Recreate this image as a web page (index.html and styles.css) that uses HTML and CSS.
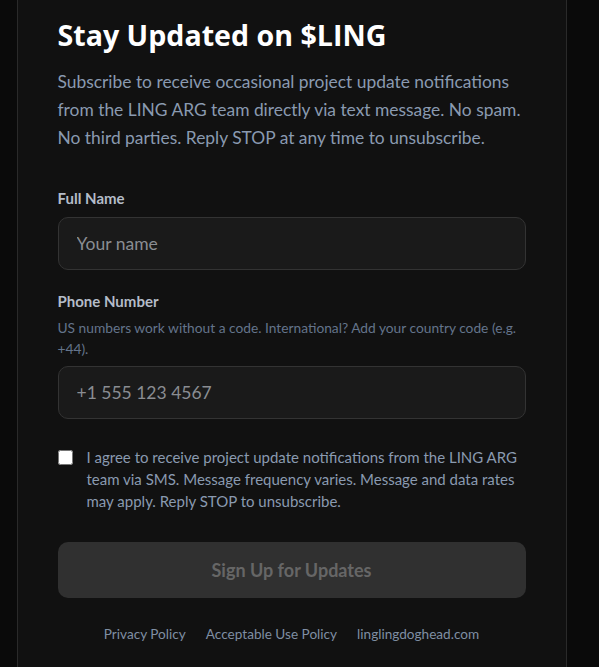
FILE: index.html
```html
<!DOCTYPE html>
<html lang="en">
  <head>
    <meta charset="UTF-8" />
    <meta name="viewport" content="width=device-width, initial-scale=1.0" />
    <title>Stay Updated on $LING</title>
    <link rel="stylesheet" href="styles.css">
  </head>
  <body>
    <main class="page">
      <section class="card">
        <h1>Stay Updated on $LING</h1>
        <p class="intro">
          Subscribe to receive occasional project update notifications from the
          LING ARG team directly via text message. No spam. No third parties.
          Reply STOP at any time to unsubscribe.
        </p>

        <form class="signup" onsubmit="return false">
          <div class="field">
            <label for="full-name">Full Name</label>
            <input type="text" id="full-name" placeholder="Your name" />
          </div>

          <div class="field">
            <label for="phone">Phone Number</label>
            <p class="hint">
              US numbers work without a code. International? Add your country
              code (e.g. +44).
            </p>
            <input type="tel" id="phone" placeholder="+1 555 123 4567" />
          </div>

          <div class="consent">
            <input type="checkbox" id="consent" />
            <label for="consent">
              I agree to receive project update notifications from the LING ARG
              team via SMS. Message frequency varies. Message and data rates
              may apply. Reply STOP to unsubscribe.
            </label>
          </div>

          <button type="submit" class="submit-btn" disabled>
            Sign Up for Updates
          </button>
        </form>

        <nav class="footer-links">
          <a href="#">Privacy Policy</a>
          <a href="#">Acceptable Use Policy</a>
          <a href="#">linglingdoghead.com</a>
        </nav>
      </section>
    </main>
  </body>
</html>
```

FILE: styles.css
```css
* {
  margin: 0;
  padding: 0;
  box-sizing: border-box;
}

body {
  font-family: "Segoe UI", Lato, "Open Sans", sans-serif;
  background: #0a0a0a;
  color: #e5e7eb;
}

.page {
  display: flex;
  justify-content: center;
  padding-right: 16px;
  min-height: 100vh;
}

.card {
  width: 550px;
  background: #111111;
  border-left: 1px solid #2a2a2a;
  border-right: 1px solid #2a2a2a;
  padding: 18px 40px 40px;
}

h1 {
  font-family: "Segoe UI", "Open Sans", sans-serif;
  font-size: 28.6px;
  line-height: 34px;
  font-weight: 700;
  color: #ffffff;
}

.intro {
  margin-top: 16px;
  font-size: 17.4px;
  line-height: 28px;
  color: #8a9ab0;
}

.signup {
  margin-top: 36px;
}

.field {
  display: flex;
  flex-direction: column;
  margin-bottom: 21px;
}

.field label {
  font-size: 15px;
  line-height: 20px;
  font-weight: 700;
  color: #b4bcc8;
  margin-bottom: 9px;
}

.hint {
  margin-top: -3px;
  margin-bottom: 7px;
  font-size: 13.75px;
  line-height: 21px;
  color: #64748b;
}

input[type="text"],
input[type="tel"] {
  height: 53px;
  padding: 0 18px;
  font-family: inherit;
  font-size: 17.5px;
  color: #e5e7eb;
  background: #1a1a1a;
  border: 1px solid #333333;
  border-radius: 10px;
  outline: none;
}

input::placeholder {
  color: #8a8d92;
}

.consent {
  display: flex;
  align-items: flex-start;
  gap: 14px;
  margin-top: 27px;
}

.consent input {
  flex: none;
  width: 15px;
  height: 15px;
  margin-top: 4px;
}

.consent label {
  font-size: 15px;
  line-height: 22px;
  color: #8a9ab0;
}

.submit-btn {
  display: block;
  width: 100%;
  height: 56px;
  margin-top: 30px;
  font-family: inherit;
  font-size: 18px;
  font-weight: 700;
  color: #666666;
  background: #303030;
  border: none;
  border-radius: 10px;
}

.footer-links {
  display: flex;
  justify-content: center;
  gap: 20px;
  margin-top: 26px;
  font-size: 13.6px;
  line-height: 20px;
}

.footer-links a {
  color: #7f8ea3;
  text-decoration: none;
}
```
